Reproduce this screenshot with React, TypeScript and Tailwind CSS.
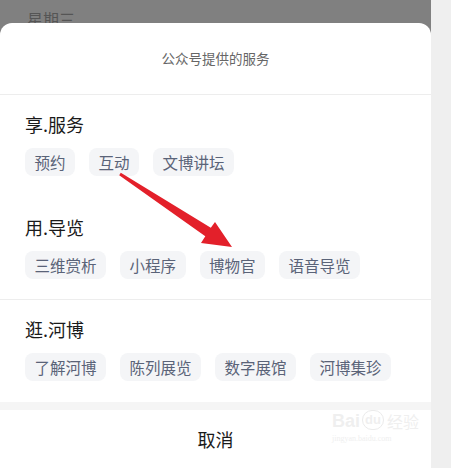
import React from "react";

const font = { fontFamily: '"Noto Sans CJK SC", "Noto Sans", sans-serif' };

function Chip({ label }: { label: string }) {
  return (
    <div className="h-[28px] px-[9.5px] rounded-[8px] bg-[#f4f5f7] text-[#5a6378] text-[15.5px] leading-[28px] whitespace-nowrap">
      {label}
    </div>
  );
}

function Section({ title, chips }: { title: string; chips: string[] }) {
  return (
    <div className="flex flex-col">
      <div className="text-[18px] leading-[24px] text-[#1a1a1a]">{title}</div>
      <div className="mt-[12px] flex gap-[14px]">
        {chips.map((c) => (
          <Chip key={c} label={c} />
        ))}
      </div>
    </div>
  );
}

export default function App() {
  return (
    <div className="relative w-[451px] h-[468px] overflow-hidden bg-[#efefef] flex" style={font}>
      <div className="w-[431px] h-full bg-[#808080] flex flex-col">
        <div className="h-[23px] overflow-hidden pl-[27px] pt-[9px]">
          <div className="text-[16px] leading-[20px] text-[#555555]">星期三</div>
        </div>
        <div className="flex-1 bg-white rounded-t-[12px] flex flex-col">
          <div className="h-[71px] flex items-center justify-center text-[13.5px] text-[#666666]">
            公众号提供的服务
          </div>
          <div className="h-px bg-[#ededed]" />
          <div className="pl-[25px] pt-[17px] pb-[20px] flex flex-col gap-[39px]">
            <Section title="享.服务" chips={["预约", "互动", "文博讲坛"]} />
            <Section title="用.导览" chips={["三维赏析", "小程序", "博物官", "语音导览"]} />
          </div>
          <div className="h-px bg-[#ededed]" />
          <div className="pl-[25px] pt-[17px] pb-[21px]">
            <Section title="逛.河博" chips={["了解河博", "陈列展览", "数字展馆", "河博集珍"]} />
          </div>
          <div className="h-[8px] bg-[#f5f5f5]" />
          <div className="flex-1 flex items-center justify-center text-[18px] text-[#1a1a1a]">
            取消
          </div>
        </div>
      </div>

      {/* red arrow annotation */}
      <svg className="absolute left-0 top-0 pointer-events-none" width="451" height="468">
        <polygon
          points="120.8,172.7 210.8,227.8 215,222 232,247 201,243 205.3,236.2 119.2,175.3"
          fill="#e3202a"
        />
      </svg>

      {/* watermark */}
      <div className="absolute left-[332px] top-[410px] w-[92px] flex flex-col items-start pointer-events-none">
        <div className="flex items-end">
          <span className="text-[18px] leading-[18px] font-bold text-[#efefef]" style={{ fontFamily: '"Liberation Sans", sans-serif' }}>Bai</span>
          <span className="ml-[2px] text-[13px] leading-[18px] font-bold text-[#efefef] border border-[#ebebeb] rounded-full px-[2px]" style={{ fontFamily: '"Liberation Sans", sans-serif' }}>du</span>
          <span className="ml-[3px] text-[16px] leading-[18px] text-[#efefef]">经验</span>
        </div>
        <div className="mt-[4px] text-[8px] leading-[10px] text-[#efefef]" style={{ fontFamily: '"Liberation Serif", serif' }}>jingyan.baidu.com</div>
      </div>
    </div>
  );
}
